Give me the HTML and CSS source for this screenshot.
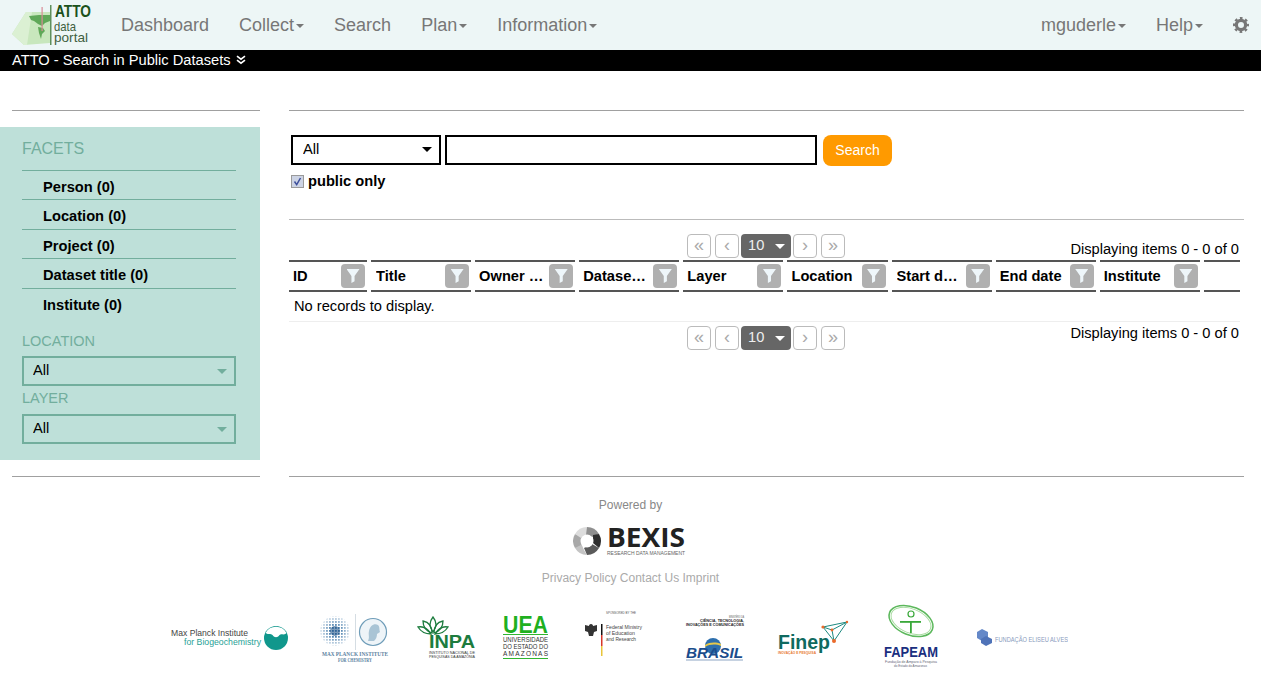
FILE: index.html
```html
<!DOCTYPE html>
<html lang="en">
  <head>
    <meta charset="UTF-8" />
    <title>ATTO - Search in Public Datasets</title>
    <link rel="stylesheet" href="styles.css">
  </head>
  <body>
    <!-- top menu -->
    <nav class="navbar">
      <a class="brand" href="#">
        <svg width="80" height="42" viewBox="12 4 80 42">
          <polygon points="12,34 26,12 50,12 50,43 24,45" fill="#c8e7bd" />
          <polygon points="12,34 26,12 32,12 27,45 24,45" fill="#dbf0d3" />
          <path d="M29 16l10-1 11 0 0 6-5 2-3 3-4-2-4-3-3-1zM38 27l5 1 2 3-3 3-1 5-2-6z" fill="#5fa858" />
          <rect x="41.500" y="7" width="1.200" height="24" fill="#d98a96" />
          <rect x="50" y="5" width="1.500" height="40" fill="#5f8f5c" />
          <text x="55" y="17" class="logo-atto" textLength="36" lengthAdjust="spacingAndGlyphs">ATTO</text>
          <text x="54" y="31" class="logo-sub" textLength="22" lengthAdjust="spacingAndGlyphs">data</text>
          <text x="54" y="41.500" class="logo-sub" textLength="34" lengthAdjust="spacingAndGlyphs">portal</text>
        </svg>
      </a>
      <ul class="nav-list">
        <li><a href="#">Dashboard</a></li>
        <li><a href="#">Collect<span class="caret"></span></a></li>
        <li><a href="#">Search</a></li>
        <li><a href="#">Plan<span class="caret"></span></a></li>
        <li><a href="#">Information<span class="caret"></span></a></li>
      </ul>
      <ul class="nav-list nav-right">
        <li><a href="#">mguderle<span class="caret"></span></a></li>
        <li><a href="#">Help<span class="caret"></span></a></li>
        <li class="gear">
          <svg width="16" height="16" viewBox="0 0 16 16">
            <circle cx="8" cy="8" r="4.600" fill="none" stroke="#777" stroke-width="3.200" />
            <circle cx="8" cy="8" r="6.900" fill="none" stroke="#777" stroke-width="2.200" stroke-dasharray="2.700 2.720" stroke-dashoffset="1.350" />
          </svg>
        </li>
      </ul>
    </nav>

    <div class="title-bar">
      ATTO - Search in Public Datasets
      <svg width="10" height="10" viewBox="0 0 10 10">
        <path d="M1 1.200l4 3 4-3M1 5.200l4 3 4-3" fill="none" stroke="#fff" stroke-width="1.600" />
      </svg>
    </div>

    <div class="main">
      <aside class="sidebar">
        <hr class="rule" />
        <div class="facets">
          <h2>Facets</h2>
          <ul class="facet-list">
            <li>Person (0)</li>
            <li>Location (0)</li>
            <li>Project (0)</li>
            <li>Dataset title (0)</li>
            <li>Institute (0)</li>
          </ul>
          <h3>Location</h3>
          <div class="facet-select"><select><option>All</option></select></div>
          <h3>Layer</h3>
          <div class="facet-select"><select><option>All</option></select></div>
        </div>
        <hr class="rule rule-bottom" />
      </aside>

      <section class="content">
        <hr class="rule-wide" />
        <form class="search-form">
          <div class="type-select"><select><option>All</option></select></div>
          <input class="search-input" type="text" />
          <button class="search-btn" type="button">Search</button>
        </form>
        <label class="public-only">
          <svg width="13" height="13" viewBox="0 0 13 13">
            <rect x="0.500" y="0.500" width="12" height="12" fill="#ccd3e4" stroke="#9a9a9a" />
            <path d="M3.500 6.500l2.200 3.200L9.500 3" fill="none" stroke="#3d4f9c" stroke-width="1.500" />
          </svg>
          public only
        </label>
        <hr class="rule-light" />

        <div class="pager-row pager-top">
          <span></span>
          <div class="pager">
            <a href="#">&laquo;</a>
            <a href="#">&lsaquo;</a>
            <span class="page-size">10</span>
            <a href="#">&rsaquo;</a>
            <a href="#">&raquo;</a>
          </div>
          <span class="items">Displaying items 0 - 0 of 0</span>
        </div>

        <div class="grid-head">
          <div class="col col-id"><span>ID</span><i class="filter"></i></div>
          <div class="col col-pad"><span>Title</span><i class="filter"></i></div>
          <div class="col"><span>Owner name</span><i class="filter"></i></div>
          <div class="col"><span>Dataset title</span><i class="filter"></i></div>
          <div class="col"><span>Layer</span><i class="filter"></i></div>
          <div class="col"><span>Location</span><i class="filter"></i></div>
          <div class="col col-pad"><span>Start date</span><i class="filter"></i></div>
          <div class="col"><span>End date</span><i class="filter"></i></div>
          <div class="col"><span>Institute</span><i class="filter"></i></div>
          <div class="col col-last"></div>
        </div>
        <div class="no-records">No records to display.</div>

        <div class="pager-row pager-bottom">
          <span></span>
          <div class="pager">
            <a href="#">&laquo;</a>
            <a href="#">&lsaquo;</a>
            <span class="page-size">10</span>
            <a href="#">&rsaquo;</a>
            <a href="#">&raquo;</a>
          </div>
          <span class="items">Displaying items 0 - 0 of 0</span>
        </div>
        <hr class="rule-wide rule-end" />
      </section>
    </div>

    <footer class="footer">
      <div class="powered">Powered by</div>
      <svg class="bexis" width="116" height="30" viewBox="0 0 116 30">
        <path d="M14 0a14 14 0 0 1 12 7L17 11 9 8z" fill="#8f8f8f" />
        <path d="M26 7a14 14 0 0 1 0 14l-6-5 0-8z" fill="#2e2e2e" />
        <path d="M26 21a14 14 0 0 1-12 7l-3-7 8-4z" fill="#5a5a5a" />
        <path d="M14 28a14 14 0 0 1-12-7l6-5 3 7z" fill="#c4c4c4" />
        <path d="M2 21a14 14 0 0 1 0-14l7 3-1 8z" fill="#a8a8a8" />
        <path d="M2 7a14 14 0 0 1 12-7l-1 8-5 3z" fill="#dcdcdc" />
        <circle cx="14" cy="14" r="6.500" fill="#fff" />
        <text x="34" y="20" class="bexis-name" textLength="78" lengthAdjust="spacingAndGlyphs">BEXIS</text>
        <text x="34" y="28" class="bexis-sub" textLength="78" lengthAdjust="spacingAndGlyphs">RESEARCH DATA MANAGEMENT</text>
      </svg>
      <div class="footer-links">
        <a href="#">Privacy Policy</a>
        <a href="#">Contact Us</a>
        <a href="#">Imprint</a>
      </div>

      <!-- partner logos -->
      <div class="partners">
        <svg width="135" height="72" viewBox="0 0 135 72">
          <text x="1" y="36" font-size="8.600" fill="#444" textLength="77" lengthAdjust="spacingAndGlyphs">Max Planck Institute</text>
          <text x="14" y="45" font-size="8.600" fill="#1f9f96" textLength="77" lengthAdjust="spacingAndGlyphs">for Biogeochemistry</text>
          <circle cx="106" cy="38" r="12" fill="#10978c" />
          <path d="M95.500 33a12 12 0 0 1 21 0c-3 3-5 0-7 2-2 3-5 3-7 0-2-2-4 0-7-2z" fill="#fff" />
        </svg>
        <svg width="98" height="72" viewBox="0 0 98 72">
          <defs>
            <pattern id="mpi-dots" width="3" height="3" patternUnits="userSpaceOnUse">
              <rect width="1.800" height="1.800" fill="#3f77a8" />
            </pattern>
            <radialGradient id="mpi-fade">
              <stop offset="0.300" stop-color="#fff" />
              <stop offset="1" stop-color="#fff" stop-opacity="0.150" />
            </radialGradient>
            <mask id="mpi-mask">
              <circle cx="30" cy="31" r="15" fill="url(#mpi-fade)" />
            </mask>
          </defs>
          <rect x="15" y="16" width="30" height="30" fill="url(#mpi-dots)" mask="url(#mpi-mask)" />
          <circle cx="30" cy="31" r="5" fill="#24598c" opacity=".6" />
          <rect x="50" y="14" width="1" height="36" fill="#d5dde3" />
          <circle cx="68" cy="32" r="13.500" fill="#eef4f8" stroke="#6f9db9" stroke-width="1.200" />
          <path d="M63 41c2-4 0-6 1-10 1-5 5-8 9-6 2 2 1 4 2 7l-3 2c0 3-1 5-3 7z" fill="#a9c4d5" />
          <text x="17" y="55.500" class="mpi-name" textLength="66" lengthAdjust="spacingAndGlyphs">MAX PLANCK INSTITUTE</text>
          <text x="33" y="61.500" class="mpi-name" textLength="34" lengthAdjust="spacingAndGlyphs">FOR CHEMISTRY</text>
        </svg>
        <svg width="87" height="72" viewBox="0 0 87 72">
          <g fill="none" stroke="#1d7c3e" stroke-width="1.300">
            <path d="M30 32c-4-5-4-10 0-15 4 5 4 10 0 15z" />
            <path d="M29 33c-6-2-9-6-9-12 5 1 9 5 9 12z" />
            <path d="M31 33c6-2 9-6 9-12-5 1-9 5-9 12z" />
            <path d="M28 34c-5 0-10-2-13-7 5-1 10 2 13 7z" />
            <path d="M32 34c5 0 10-2 13-7-5-1-10 2-13 7z" />
          </g>
          <text x="26" y="48" class="inpa-name" textLength="46" lengthAdjust="spacingAndGlyphs">INPA</text>
          <text x="26" y="53.500" class="tiny" fill="#333" textLength="46" lengthAdjust="spacingAndGlyphs">INSTITUTO NACIONAL DE</text>
          <text x="26" y="58" class="tiny" fill="#333" textLength="46" lengthAdjust="spacingAndGlyphs">PESQUISAS DA AMAZÔNIA</text>
        </svg>
        <svg width="77" height="72" viewBox="0 0 77 72">
          <text x="13" y="33" class="uea-name" textLength="45" lengthAdjust="spacingAndGlyphs">UEA</text>
          <rect x="13" y="34" width="45" height="1" fill="#2fb52f" />
          <text x="13" y="42" class="uea-sub" textLength="45" lengthAdjust="spacingAndGlyphs">UNIVERSIDADE</text>
          <text x="13" y="49" class="uea-sub" textLength="45" lengthAdjust="spacingAndGlyphs">DO ESTADO DO</text>
          <text x="13" y="56" class="uea-sub" textLength="45">AMAZONAS</text>
          <rect x="13" y="58" width="45" height="1" fill="#2fb52f" />
        </svg>
        <svg width="98" height="72" viewBox="0 0 98 72">
          <text x="39" y="14" class="tiny" fill="#555" textLength="30" lengthAdjust="spacingAndGlyphs">SPONSORED BY THE</text>
          <path d="M24 24c-1.500 0-2 1-2 2l-4-1v6l3 1 1 4h4l1-4 3-1v-6l-4 1c0-1-.5-2-2-2z" fill="#333" />
          <rect x="34" y="24" width="1.500" height="11" fill="#111" />
          <rect x="34" y="35" width="1.500" height="11" fill="#d8362a" />
          <rect x="34" y="46" width="1.500" height="10" fill="#e8c53a" />
          <text x="39" y="29" class="bmbf" textLength="36" lengthAdjust="spacingAndGlyphs">Federal Ministry</text>
          <text x="39" y="35" class="bmbf" textLength="29" lengthAdjust="spacingAndGlyphs">of Education</text>
          <text x="39" y="41" class="bmbf" textLength="30" lengthAdjust="spacingAndGlyphs">and Research</text>
        </svg>
        <svg width="96" height="72" viewBox="0 0 96 72">
          <text x="64" y="18" class="tiny" fill="#555" textLength="15" lengthAdjust="spacingAndGlyphs">MINISTÉRIO DA</text>
          <text x="35" y="22" class="tiny tiny-bold" fill="#222" textLength="44" lengthAdjust="spacingAndGlyphs">CIÊNCIA, TECNOLOGIA,</text>
          <text x="21" y="26" class="tiny tiny-bold" fill="#222" textLength="58" lengthAdjust="spacingAndGlyphs">INOVAÇÕES E COMUNICAÇÕES</text>
          <circle cx="48" cy="46" r="8" fill="#2d6fad" />
          <path d="M40 45c5-3 11-3 16-1v2c-5-2-11-2-16 1z" fill="#e5c84a" />
          <text x="21" y="58" class="brasil" textLength="57" lengthAdjust="spacingAndGlyphs">BRASIL</text>
          <rect x="21" y="59.500" width="57" height="1" fill="#8ea6c4" />
        </svg>
        <svg width="105" height="72" viewBox="0 0 105 72">
          <g fill="none" stroke="#1d8a80" stroke-width="1">
            <path d="M62 27L86 22 73 41zM62 27L71 30 86 22M71 30L73 41" />
          </g>
          <g fill="#ea6a2a">
            <circle cx="62" cy="27" r="1.600" />
            <circle cx="86" cy="22" r="1.200" />
            <circle cx="71" cy="30" r="1.400" />
            <circle cx="73" cy="41" r="2" />
          </g>
          <text x="17" y="49" class="finep-name" textLength="52" lengthAdjust="spacingAndGlyphs">Finep</text>
          <text x="17" y="53.500" class="tiny tiny-bold" fill="#e8782f" textLength="38" lengthAdjust="spacingAndGlyphs">INOVAÇÃO E PESQUISA</text>
        </svg>
        <svg width="91" height="72" viewBox="0 0 91 72">
          <ellipse cx="45" cy="21" rx="23" ry="14" fill="none" stroke="#5cb85c" stroke-width="1.500" transform="rotate(22 45 21)" />
          <ellipse cx="45" cy="21" rx="21" ry="12" fill="none" stroke="#a8dca0" stroke-width="1" transform="rotate(22 45 21)" />
          <circle cx="45" cy="14" r="3" fill="none" stroke="#3aa83a" stroke-width="1.200" />
          <rect x="34" y="21" width="21" height="1.800" fill="#3aa83a" />
          <rect x="44" y="21" width="1.800" height="12" fill="#3aa83a" />
          <text x="18" y="57" class="fapeam-name" textLength="54" lengthAdjust="spacingAndGlyphs">FAPEAM</text>
          <text x="19" y="63" class="tiny" fill="#667" textLength="52" lengthAdjust="spacingAndGlyphs">Fundação de Amparo à Pesquisa</text>
          <text x="28" y="67" class="tiny" fill="#667" textLength="33" lengthAdjust="spacingAndGlyphs">do Estado do Amazonas</text>
        </svg>
        <svg width="111" height="72" viewBox="0 0 111 72">
          <g fill="#6488c8">
            <polygon points="25,29 31,32 31,38 25,41 20,38 20,32" />
            <polygon points="29,36 35,39 35,43 29,46 24,43 24,39" fill="#4f73b8" />
          </g>
          <text x="38" y="42" class="eliseu" textLength="73" lengthAdjust="spacingAndGlyphs">FUNDAÇÃO ELISEU ALVES</text>
        </svg>
      </div>
    </footer>
  </body>
</html>
```

FILE: styles.css
```css
* {
  box-sizing: border-box;
}

body {
  margin: 0;
  background: #fff;
  color: #000;
  font-family: "Liberation Sans", Arial, sans-serif;
  font-size: 14.667px;
}

a {
  text-decoration: none;
}

/* top menu */
.navbar {
  display: flex;
  align-items: center;
  height: 50px;
  padding: 0 12px;
  background: #edf6f6;
}

.brand {
  display: flex;
  margin-right: 14px;
}

.logo-atto {
  font-size: 16px;
  font-weight: bold;
  fill: #1b521b;
}

.logo-sub {
  font-size: 13.500px;
  fill: #3f5f3f;
}

.nav-list {
  display: flex;
  align-items: center;
  margin: 0;
  padding: 0;
  list-style: none;
}

.nav-list a {
  display: block;
  padding: 0 15px;
  color: #777;
  font-size: 18px;
  line-height: 50px;
}

.nav-right {
  margin-left: auto;
}

.gear {
  display: flex;
  margin-left: 15px;
}

.caret {
  display: inline-block;
  margin-left: 2px;
  vertical-align: middle;
  border-top: 4px solid #777;
  border-left: 4px solid transparent;
  border-right: 4px solid transparent;
}

.title-bar {
  display: flex;
  align-items: center;
  gap: 5px;
  height: 21px;
  padding: 0 0 1px 12px;
  background: #000;
  color: #fff;
}

/* page columns */
.main {
  display: flex;
  padding-top: 39px;
}

.sidebar {
  width: 260px;
  margin-right: 29px;
}

.rule {
  height: 1px;
  margin: 0 0 16px 12px;
  border: 0;
  background: #a0a0a0;
}

.rule-bottom {
  margin: 16px 0 0 12px;
}

.facets {
  height: 333px;
  padding: 12px 24px 0 22px;
  background: #bee0d9;
}

.facets h2 {
  margin: 0;
  color: #72ae9d;
  font-size: 16px;
  font-weight: normal;
  line-height: 20px;
  text-transform: uppercase;
}

.facet-list {
  margin: 11px 0 0;
  padding: 0;
  list-style: none;
}

.facet-list li {
  height: 30px;
  padding-left: 21px;
  border-top: 1px solid #72ae9d;
  font-weight: bold;
  line-height: 33px;
}

.facet-list li:nth-child(odd) {
  height: 29px;
}

.facets h3 {
  margin: 0;
  color: #72ae9d;
  font-size: 14.500px;
  font-weight: normal;
  line-height: 20px;
  text-transform: uppercase;
}

.facet-list + h3 {
  margin-top: 14px;
}

.facet-select {
  position: relative;
  height: 30px;
  margin: 5px 0 2px;
}

.facet-select + h3 + .facet-select {
  margin-top: 6px;
}

.facet-select select {
  width: 100%;
  height: 100%;
  padding: 0 9px 2px;
  border: 2px solid #72ae9d;
  border-radius: 0;
  background: transparent;
  font: 14.667px "Liberation Sans", Arial, sans-serif;
  appearance: none;
}

.facet-select::after {
  content: "";
  position: absolute;
  top: 13px;
  right: 9px;
  border-top: 5px solid #72ae9d;
  border-left: 5px solid transparent;
  border-right: 5px solid transparent;
}

/* search area */
.content {
  width: 955px;
}

.rule-wide {
  height: 1px;
  margin: 0;
  border: 0;
  background: #a0a0a0;
}

.search-form {
  display: flex;
  align-items: flex-start;
  margin: 24px 0 0 2px;
}

.type-select {
  position: relative;
  width: 150px;
  height: 30px;
}

.type-select select {
  width: 100%;
  height: 100%;
  padding: 0 10px 2px;
  border: 2px solid #000;
  border-radius: 0;
  background: #fff;
  font: 14.667px "Liberation Sans", Arial, sans-serif;
  appearance: none;
}

.type-select::after {
  content: "";
  position: absolute;
  top: 12px;
  right: 9px;
  border-top: 5px solid #000;
  border-left: 5px solid transparent;
  border-right: 5px solid transparent;
}

.search-input {
  width: 372px;
  height: 30px;
  margin-left: 4px;
  border: 2px solid #000;
  outline: none;
}

.search-btn {
  width: 69px;
  height: 31px;
  margin-left: 6px;
  padding: 0 0 2px;
  border: 0;
  border-radius: 8px;
  background: #ff9a00;
  color: #fff;
  font: 14px "Liberation Sans", Arial, sans-serif;
}

.public-only {
  display: flex;
  align-items: center;
  gap: 4px;
  height: 16px;
  margin: 7px 0 0 2px;
  font-weight: bold;
}

.rule-light {
  height: 1px;
  margin: 30px 0 0;
  border: 0;
  background: #bbb;
}

/* table */
.pager-row {
  display: grid;
  grid-template-columns: 1fr auto 1fr;
  width: 951px;
}

.pager-top {
  margin-top: 14px;
}

.pager-bottom {
  margin-top: 4px;
}

.pager {
  display: flex;
  gap: 4px;
  margin-left: 3px;
}

.pager a {
  display: block;
  width: 24px;
  height: 24px;
  border: 1px solid #bbb;
  border-radius: 4px;
  color: #aaa;
  font-size: 18px;
  line-height: 20px;
  text-align: center;
}

.page-size {
  position: relative;
  width: 50px;
  height: 24px;
  margin: 0 -2px;
  padding-left: 7px;
  border-radius: 4px;
  background: #666;
  color: #eee;
  line-height: 23px;
}

.page-size::after {
  content: "";
  position: absolute;
  top: 10px;
  right: 6px;
  border-top: 5px solid #fff;
  border-left: 5px solid transparent;
  border-right: 5px solid transparent;
}

.items {
  padding-right: 1px;
  text-align: right;
}

.pager-top .items {
  align-self: end;
  line-height: 17px;
}

.pager-bottom .items {
  line-height: 14px;
}

.grid-head {
  display: flex;
  gap: 4px;
  margin-top: 2px;
}

.col {
  display: flex;
  align-items: center;
  width: 100.120px;
  height: 32px;
  padding: 0 2px 0 4px;
  border-top: 2px solid #555;
  border-bottom: 2px solid #555;
  font-weight: bold;
}

.col-pad {
  padding-left: 5px;
}

.col-id {
  width: 78px;
}

.col-last {
  width: 36px;
}

.col span {
  flex: 1;
  min-width: 0;
  margin-right: 4px;
  padding-bottom: 1px;
  overflow: hidden;
  text-overflow: ellipsis;
  white-space: nowrap;
}

.filter {
  position: relative;
  width: 24px;
  height: 24px;
  border-radius: 4px;
  background: #b0b0b0;
}

/* funnel */
.filter::before {
  content: "";
  position: absolute;
  top: 5px;
  left: 5.500px;
  width: 13px;
  height: 14px;
  background: #eef6fa;
  clip-path: polygon(0 0, 100% 0, 62% 50%, 62% 88%, 38% 100%, 38% 50%);
}

.no-records {
  width: 951px;
  height: 30px;
  padding-left: 5px;
  border-bottom: 1px solid #eee;
  line-height: 28px;
}

.rule-end {
  margin-top: 126px;
}

/* footer */
.footer {
  display: flex;
  flex-direction: column;
  align-items: center;
}

.powered {
  margin-top: 21px;
  color: #888;
  font-size: 12px;
  line-height: 15px;
}

.bexis {
  margin-top: 14px;
}

.bexis-name {
  font-family: "Open Sans", sans-serif;
  font-size: 26px;
  font-weight: 700;
  fill: #222;
}

.bexis-sub {
  font-size: 5px;
  fill: #666;
}

.footer-links {
  margin-top: 14px;
  font-size: 12px;
  line-height: 15px;
}

.footer-links a {
  color: #aaa;
}

.partners {
  display: flex;
  align-self: flex-start;
  margin: 14px 0 0 170px;
}

.partners text {
  font-family: "Liberation Sans", Arial, sans-serif;
}

.partners .mpi-name {
  font-family: "Liberation Serif", serif;
  font-size: 5.500px;
  font-weight: bold;
  fill: #5c7fa0;
}

.tiny {
  font-size: 3.500px;
}

.tiny-bold {
  font-weight: bold;
}

.inpa-name {
  font-size: 19px;
  font-weight: bold;
  fill: #1d7c3e;
}

.uea-name {
  font-size: 23px;
  font-weight: bold;
  fill: #1fb01f;
}

.uea-sub {
  font-size: 6.500px;
  fill: #333;
}

.bmbf {
  font-size: 6px;
  fill: #444;
}

.brasil {
  font-size: 15px;
  font-weight: bold;
  font-style: italic;
  fill: #1b4d8c;
}

.finep-name {
  font-size: 21px;
  font-weight: bold;
  fill: #0f6a60;
}

.fapeam-name {
  font-size: 14.500px;
  font-weight: bold;
  fill: #1a2f80;
}

.eliseu {
  font-size: 7px;
  fill: #8a9bbd;
}
```
